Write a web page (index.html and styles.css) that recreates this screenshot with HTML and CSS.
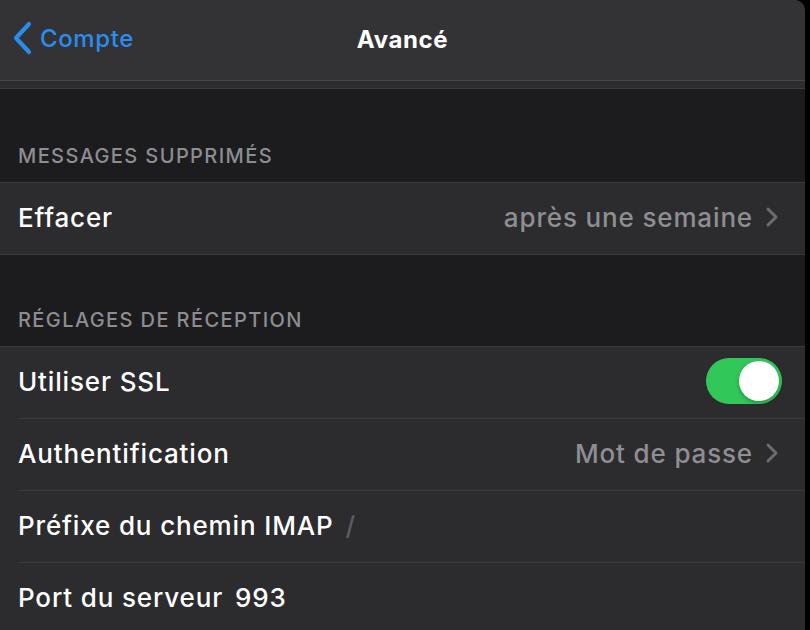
FILE: index.html
```html
<!DOCTYPE html>
<html lang="fr">
<head>
<meta charset="utf-8">
<title>Avancé</title>
<link rel="stylesheet" href="styles.css">
</head>
<body>
<div class="screen">
  <header class="nav">
    <a class="back" href="#">
      <svg class="back-chevron" width="22" height="34" viewBox="0 0 22 34"><path d="M17 3 L4 17 L17 31" fill="none" stroke="currentColor" stroke-width="4.2" stroke-linecap="round" stroke-linejoin="round"/></svg>
      <span>Compte</span>
    </a>
    <h1 class="title">Avancé</h1>
  </header>
  <div class="nav-band"></div>
  <main class="content">
    <section class="section">
      <h2 class="section-header">MESSAGES SUPPRIMÉS</h2>
      <div class="group">
        <div class="row">
          <span class="label">Effacer</span>
          <span class="value">après une semaine</span>
          <svg class="chevron" width="14" height="22" viewBox="0 0 14 22"><path d="M3 3 L11 11 L3 19" fill="none" stroke="currentColor" stroke-width="3" stroke-linecap="round" stroke-linejoin="round"/></svg>
        </div>
      </div>
    </section>
    <section class="section">
      <h2 class="section-header">RÉGLAGES DE RÉCEPTION</h2>
      <div class="group">
        <div class="row">
          <span class="label">Utiliser SSL</span>
          <span class="toggle on"><span class="knob"></span></span>
        </div>
        <div class="row">
          <span class="label">Authentification</span>
          <span class="value">Mot de passe</span>
          <svg class="chevron" width="14" height="22" viewBox="0 0 14 22"><path d="M3 3 L11 11 L3 19" fill="none" stroke="currentColor" stroke-width="3" stroke-linecap="round" stroke-linejoin="round"/></svg>
        </div>
        <div class="row">
          <span class="label">Préfixe du chemin IMAP</span>
          <span class="input placeholder">/</span>
        </div>
        <div class="row">
          <span class="label">Port du serveur</span>
          <span class="input">993</span>
        </div>
      </div>
    </section>
  </main>
</div>
</body>
</html>
```
FILE: styles.css
```css
html, body {
  margin: 0;
  padding: 0;
  background: #000;
}
body {
  width: 810px;
  height: 630px;
  overflow: hidden;
  font-family: Inter, "Liberation Sans", sans-serif;
}
.screen {
  width: 805px;
  height: 630px;
  background: #1c1c1e;
  border-top-right-radius: 10px;
  overflow: hidden;
}
.nav {
  height: 80px;
  background: #333335;
  border-bottom: 1px solid #48484a;
  display: flex;
  align-items: center;
  justify-content: center;
  position: relative;
}
.back {
  position: absolute;
  left: 12px;
  top: 21px;
  display: flex;
  align-items: center;
  gap: 6px;
  color: #2a8cf0;
  text-decoration: none;
  font-size: 24px;
  font-weight: 500;
  letter-spacing: 0.6px;
}
.back-chevron {
  display: block;
}
.title {
  margin: 0;
  color: #fff;
  font-size: 24px;
  font-weight: 700;
  letter-spacing: 0.6px;
  padding-bottom: 2px;
}
.nav-band {
  height: 7px;
  background: #2d2d2f;
  border-bottom: 1px solid #3c3c3e;
}
.content {
  display: flex;
  flex-direction: column;
}
.section {
  padding-top: 55px;
}
.section + .section {
  padding-top: 53px;
}
.section-header {
  margin: 0 0 14px;
  padding-left: 18px;
  height: 24px;
  line-height: 24px;
  font-size: 20px;
  font-weight: 500;
  color: #8d8d92;
  letter-spacing: 1.4px;
}
.group {
  background: #2c2c2e;
  border-top: 1px solid #3a3a3c;
  border-bottom: 1px solid #3a3a3c;
  padding-left: 18px;
}
.row {
  height: 71px;
  box-sizing: border-box;
  padding-bottom: 3px;
  display: flex;
  align-items: center;
  padding-right: 23px;
  color: #fff;
  font-size: 26px;
  font-weight: 500;
  letter-spacing: 0.85px;
}
.row + .row {
  border-top: 1px solid #3a3a3c;
  height: 72px;
}
.label {
  flex: none;
}
.value {
  margin-left: auto;
  color: #8e8e93;
}
.chevron {
  color: #6c6c70;
  margin-left: 12px;
  margin-right: 3px;
  display: block;
}
.input {
  margin-left: 12px;
  color: #fff;
}
.input.placeholder {
  color: #5c5c60;
}
.toggle {
  margin-left: auto;
  width: 76px;
  height: 46px;
  border-radius: 23px;
  background: #31c759;
  display: flex;
  align-items: center;
  justify-content: flex-end;
  padding: 0 3px;
  box-sizing: border-box;
}
.knob {
  width: 40px;
  height: 40px;
  border-radius: 50%;
  background: #fff;
  box-shadow: 0 2px 4px rgba(0,0,0,0.25);
}
```
